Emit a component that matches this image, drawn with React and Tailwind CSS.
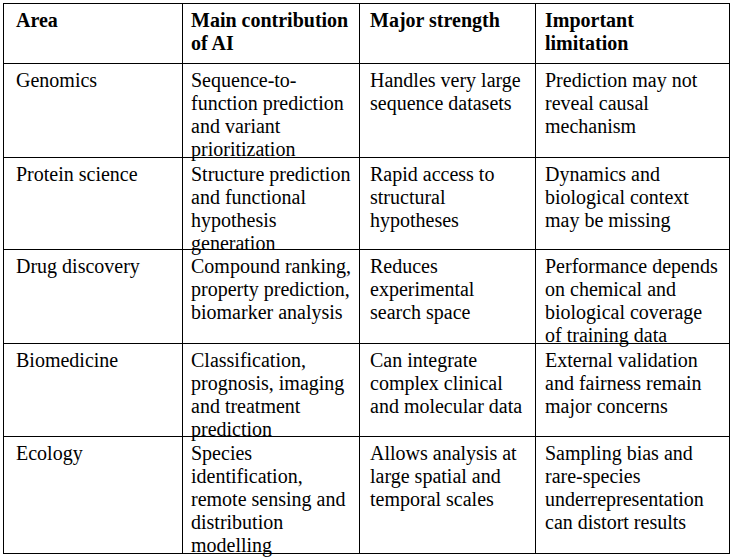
import React from 'react';

const headers = ['Area', 'Main contribution of AI', 'Major strength', 'Important limitation'];

const rows = [
  [
    'Genomics',
    'Sequence-to-function prediction and variant prioritization',
    'Handles very large sequence datasets',
    'Prediction may not reveal causal mechanism',
  ],
  [
    'Protein science',
    'Structure prediction and functional hypothesis generation',
    'Rapid access to structural hypotheses',
    'Dynamics and biological context may be missing',
  ],
  [
    'Drug discovery',
    'Compound ranking, property prediction, biomarker analysis',
    'Reduces experimental search space',
    'Performance depends on chemical and biological coverage of training data',
  ],
  [
    'Biomedicine',
    'Classification, prognosis, imaging and treatment prediction',
    'Can integrate complex clinical and molecular data',
    'External validation and fairness remain major concerns',
  ],
  [
    'Ecology',
    'Species identification, remote sensing and distribution modelling',
    'Allows analysis at large spatial and temporal scales',
    'Sampling bias and rare-species underrepresentation can distort results',
  ],
];

// per-column padding so the wraps land where the original table wraps
const colPad = ['pl-[12px] pr-[6px]', 'pl-[8px] pr-[4px]', 'pl-[10px] pr-[8px]', 'pl-[9px] pr-[10px]'];

const Cell = ({ children, col, bold }) => (
  <div
    className={`border-r border-b border-black pt-[5px] ${colPad[col]} ${bold ? 'font-bold' : 'font-normal'}`}
  >
    {children}
  </div>
);

const App = () => {
  return (
    <div className="min-h-[558px] w-[735px] bg-white pl-[3px] pt-[3px] text-black font-['Liberation_Serif','Times_New_Roman',serif] text-[20px] leading-[23px]">
      <div className="grid w-[727px] grid-cols-[179px_177px_176px_194px] grid-rows-[60px_94px_92px_94px_93px_117px] border-l border-t border-black">
        {/* Header */}
        {headers.map((h, i) => (
          <Cell key={h} col={i} bold>
            {h}
          </Cell>
        ))}

        {/* Body */}
        {rows.map((row) =>
          row.map((text, i) => (
            <Cell key={row[0] + i} col={i}>
              {text}
            </Cell>
          ))
        )}
      </div>
    </div>
  );
};

export default App;
